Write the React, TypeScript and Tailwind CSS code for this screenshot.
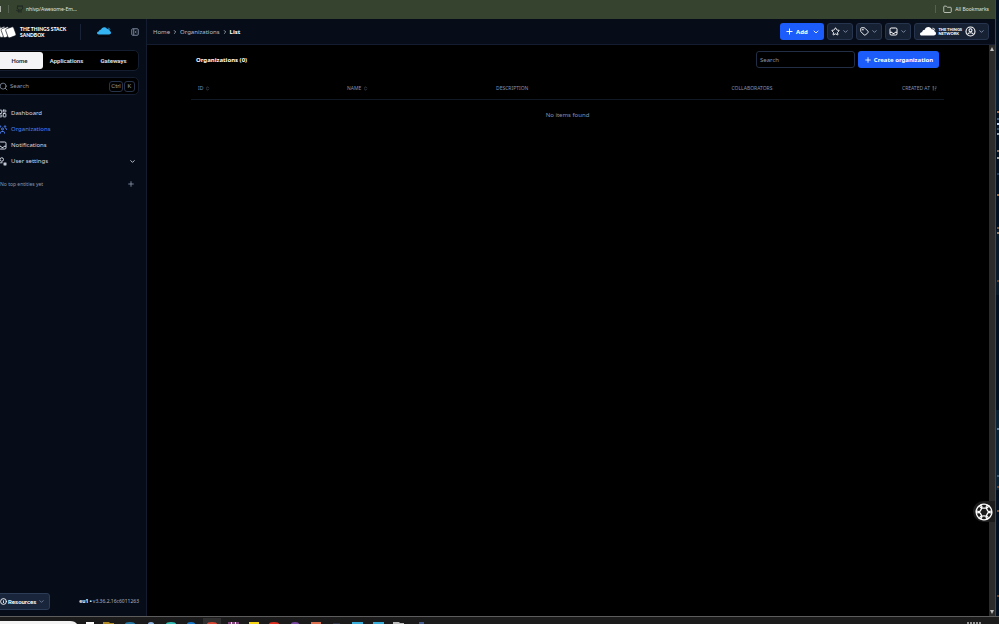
import React from 'react';
import {
  ChevronDown,
  ChevronRight,
  ChevronsUpDown,
  Folder,
  Info,
  LayoutDashboard,
  Plus,
  Search,
  Star,
  Tag,
  Github,
} from 'lucide-react';

function BookmarksBar() {
  return (
    <div className="flex h-[19px] shrink-0 items-center bg-[#36432f] pb-px text-[5px] leading-[8px] text-[#e2e6de]">
      <span className="h-[6px] w-px bg-[#aab0a5]" />
      <span className="ml-[7px] h-[8px] w-px bg-[#566050]" />
      <a href="#bookmark" className="ml-[7px] flex items-center gap-[2px]">
        <Github size={8} className="text-[#1b2420]" strokeWidth={3} />
        nhivp/Awesome-Em...
      </a>
      <span className="ml-auto h-[8px] w-px bg-[#566050]" />
      <button type="button" className="mr-[6px] ml-[7px] flex items-center gap-[3px]">
        <Folder size={9} strokeWidth={2} />
        All Bookmarks
      </button>
    </div>
  );
}

function StackLogo() {
  return (
    <svg width="20" height="14" viewBox="0 0 20 14" className="shrink-0">
      <g stroke="#070d18" strokeWidth="0.6" fill="#fff">
        <rect x="-2" y="2.5" width="8" height="9.500" rx="1.500" transform="rotate(-20 2 7)" />
        <rect x="1.500" y="2.500" width="8" height="9.500" rx="1.500" transform="rotate(-20 5 7)" />
        <rect x="5" y="2.500" width="8" height="9.500" rx="1.500" transform="rotate(-20 9 7)" />
        <rect x="9.500" y="2.500" width="8.500" height="9.500" rx="1.500" transform="rotate(-20 14 7)" />
      </g>
    </svg>
  );
}

function Cloud({ className }: { className: string }) {
  return (
    <svg viewBox="0 0 16 9" className={className} fill="currentColor">
      <path d="M2 8.6C.8 8.5 0 7.8 0 6.9c0-1 .9-1.700 2.100-1.700C2.200 3.600 3.500 3 4.500 3.100 5.100 1.200 6.700 0 8.400.1c1.700.1 2.800 1 3.200 2.100 1.900-.4 3.100.9 3 2.400.9.3 1.400 1 1.400 2 0 1.200-1 2-2.300 2Z" />
      <path d="M12.200 1.200q2.500-.4 2.700 2" fill="none" stroke="currentColor" strokeWidth="0.7" />
    </svg>
  );
}

function OrganizationIcon() {
  return (
    <svg width="9" height="9" viewBox="0 0 18 18" fill="none" stroke="currentColor" strokeWidth="2">
      <circle cx="9" cy="8" r="2" />
      <circle cx="4" cy="3" r="1.500" />
      <circle cx="14" cy="3" r="1.500" />
      <path d="M5 17v-1.500a2.500 2.500 0 0 1 2.500-2.500h3a2.500 2.500 0 0 1 2.500 2.500V17M1 10V8.500a2 2 0 0 1 2-2h1M17 10V8.500a2 2 0 0 0-2-2h-1" />
    </svg>
  );
}

function UserSettingsIcon() {
  return (
    <svg width="9" height="9" viewBox="0 0 18 18" fill="none" stroke="currentColor" strokeWidth="2">
      <circle cx="7.500" cy="5" r="3.500" />
      <path d="M2 17v-2a3.500 3.500 0 0 1 3.500-3.500H9" />
      <circle cx="14" cy="14" r="2" />
      <path d="M14 10v8M10.500 12l7 4M17.500 12l-7 4" strokeWidth="1.200" />
    </svg>
  );
}

function InboxIcon() {
  return (
    <svg width="9" height="9" viewBox="0 0 18 18" fill="none" stroke="currentColor" strokeWidth="2">
      <rect x="2" y="2" width="14" height="14" rx="2.500" />
      <path d="M2 10.500h4l1.500 2.500h3l1.500-2.500h4" />
    </svg>
  );
}

function PanelIcon() {
  return (
    <svg width="8" height="8" viewBox="0 0 16 16" fill="none" stroke="currentColor" strokeWidth="1.800">
      <rect x="1.500" y="1.500" width="13" height="13" rx="2" />
      <path d="M5.500 2v12M11 5.500 8.500 8l2.500 2.500" />
    </svg>
  );
}

function AccountIcon() {
  return (
    <svg width="11" height="11" viewBox="0 0 22 22" fill="none" stroke="currentColor" strokeWidth="2.200">
      <circle cx="11" cy="11" r="9" />
      <circle cx="11" cy="8.500" r="3" />
      <path d="M5 17c1-2.500 3-3.500 6-3.500s5 1 6 3.500" />
    </svg>
  );
}

function SortDownIcon() {
  return (
    <svg width="5" height="5" viewBox="0 0 10 10" fill="none" stroke="currentColor" strokeWidth="1.200">
      <path d="M2.500 1v8M1 1.500h3M5.500 2h4M5.500 5h3M5.500 8h2" />
    </svg>
  );
}

const navItems = [
  { label: 'Dashboard', icon: <LayoutDashboard size={9} strokeWidth={2.5} /> },
  { label: 'Organizations', icon: <OrganizationIcon />, active: true },
  { label: 'Notifications', icon: <InboxIcon /> },
];

function Sidebar() {
  return (
    <aside className="flex w-[147px] shrink-0 flex-col overflow-hidden border-r border-[#131d2f] bg-[#070d18] pr-[7px] pb-[6px]">
      <div className="flex h-[31px] shrink-0 items-center pb-[5px]">
        <div className="-ml-[3px] flex items-center gap-[3px]">
          <StackLogo />
          <span className="font-['Lato',sans-serif] text-[5px] leading-[6px] font-black whitespace-nowrap text-white">
            THE THINGS STACK
            <br />
            SANDBOX
          </span>
        </div>
        <span className="ml-auto h-[16px] w-px bg-[#182338]" />
        <div className="mx-[16px] flex flex-col items-center">
          <Cloud className="h-[8px] w-[14px] text-[#35b4f3]" />
          <span className="mt-px h-px w-[12px] bg-[#020407]" />
        </div>
        <button type="button" aria-label="Collapse sidebar" className="ml-[4px] text-[#8592aa]">
          <PanelIcon />
        </button>
      </div>

      <div className="-ml-[6px] flex h-[21px] shrink-0 items-stretch rounded-[5px] border border-[#141e30] bg-black p-px font-['Roboto',sans-serif] text-[6px] font-semibold text-[#e2e6ed]">
        <button type="button" className="w-[47px] rounded-[3px] bg-[#f4f4f6] text-[#222b38]">
          Home
        </button>
        <button type="button" className="flex-1">
          Applications
        </button>
        <button type="button" className="flex-1">
          Gateways
        </button>
      </div>

      <label className="mt-[6px] -ml-[6px] flex h-[18px] shrink-0 items-center rounded-[5px] border border-[#141e30] bg-black pr-[3px] pl-[4px] text-[#8f9bb1]">
        <Search size={9} className="shrink-0" />
        <input
          aria-label="Search"
          placeholder="Search"
          className="ml-[2px] min-w-0 flex-1 bg-transparent text-[6px] outline-none placeholder:text-[#8f9bb1]"
        />
        <kbd className="flex h-[11px] w-[14px] items-center justify-center rounded-[3px] border border-[#27344d] font-['Roboto',sans-serif] text-[6px]">
          Ctrl
        </kbd>
        <kbd className="ml-px flex h-[11px] w-[11px] items-center justify-center rounded-[3px] border border-[#27344d] font-['Roboto',sans-serif] text-[6px]">
          K
        </kbd>
      </label>

      <nav className="mt-[10px] -ml-[2px] text-[6px] text-[#d3dae5]">
        {navItems.map((item) => (
          <a
            key={item.label}
            href="#nav"
            className={`flex h-[16px] items-center gap-[4px] ${item.active ? 'text-[#4b80f5]' : ''}`}
          >
            {item.icon}
            {item.label}
          </a>
        ))}
        <button type="button" className="flex h-[16px] w-full items-center gap-[4px]">
          <UserSettingsIcon />
          User settings
          <ChevronDown size={7} strokeWidth={3} className="mr-[3px] ml-auto" />
        </button>
      </nav>

      <div className="mt-[11px] flex items-center justify-between pr-[4px] text-[5px] text-[#8a97ad]">
        No top entities yet
        <button type="button" aria-label="Add entity">
          <Plus size={8} strokeWidth={2.5} />
        </button>
      </div>

      <div className="mt-auto flex items-center justify-between">
        <button
          type="button"
          className="-ml-[4px] flex h-[17px] w-[54px] items-center rounded-[3px] border border-[#2c3b56] bg-[#19253a] pr-[4px] pl-[3px] font-['Roboto',sans-serif] text-[6px] font-semibold text-white"
        >
          <Info size={7} strokeWidth={3} className="mr-px" />
          Resources
          <ChevronDown size={7} strokeWidth={2.5} className="ml-auto text-[#8390a8]" />
        </button>
        <p className="text-[5px] text-[#a8b4c8]">
          <b className="text-white">eu1 •</b> v3.36.2.16c6011263
        </p>
      </div>
    </aside>
  );
}

function MenuButton({ label, children }: { label: string; children: React.ReactNode }) {
  return (
    <button
      type="button"
      aria-label={label}
      className="flex h-[17px] items-center gap-[2px] rounded-[3px] border border-[#26344d] bg-[#162134] px-[3px] text-white"
    >
      {children}
      <ChevronDown size={7} strokeWidth={3} className="text-[#8794ab]" />
    </button>
  );
}

function Header() {
  return (
    <header className="flex h-[26px] shrink-0 items-center border-b border-[#131d2f] bg-[#070d18] pr-[6px] pl-[6px]">
      <nav aria-label="Breadcrumb" className="flex items-center gap-[2px] text-[6px] text-[#b3bdcd]">
        <a href="#home">Home</a>
        <ChevronRight size={6} strokeWidth={3} />
        <a href="#organizations">Organizations</a>
        <ChevronRight size={6} strokeWidth={3} />
        <span className="font-bold text-white">List</span>
      </nav>
      <div className="ml-auto flex items-center gap-[3px]">
        <button
          type="button"
          className="flex h-[17px] w-[44px] items-center justify-center gap-[2px] rounded-[3px] bg-[#1c5cfb] text-[6px] font-bold text-white"
        >
          <Plus size={9} strokeWidth={2.5} />
          Add
          <ChevronDown size={8} strokeWidth={2.5} className="ml-[2px]" />
        </button>
        <MenuButton label="Bookmarks">
          <Star size={9} strokeWidth={2.5} />
        </MenuButton>
        <MenuButton label="Tags">
          <Tag size={9} strokeWidth={2.5} />
        </MenuButton>
        <MenuButton label="Inbox">
          <InboxIcon />
        </MenuButton>
        <MenuButton label="Account">
          <Cloud className="ml-[2px] h-[9px] w-[16px]" />
          <span className="mr-px text-left font-['Lato',sans-serif] text-[4px] leading-[4px] font-black whitespace-nowrap">
            THE THINGS
            <br />
            NETWORK
          </span>
          <AccountIcon />
        </MenuButton>
      </div>
    </header>
  );
}

function OrganizationsPage() {
  return (
    <main className="min-w-0 flex-1 bg-black pt-[6px] pr-[45px] pl-[44px]">
      <div className="flex items-center pr-[5px] pl-[5px]">
        <h1 className="text-[6px] font-bold text-white">Organizations (0)</h1>
        <input
          aria-label="Search organizations"
          placeholder="Search"
          className="ml-auto h-[17px] w-[99px] rounded-[3px] border border-[#222e45] bg-black px-[3px] text-[6px] text-white placeholder:text-[#8996ac]"
        />
        <button
          type="button"
          className="ml-[3px] flex h-[17px] w-[81px] items-center justify-center gap-[2px] rounded-[3px] bg-[#1c5cfb] text-[6px] font-bold whitespace-nowrap text-white"
        >
          <Plus size={8} strokeWidth={2.5} className="shrink-0" />
          Create organization
        </button>
      </div>

      <table className="mt-[10px] w-full table-fixed text-[5px] leading-[8px] text-[#8493b4]">
        <colgroup>
          <col className="w-[149px]" />
          <col className="w-[149px]" />
          <col />
          <col className="w-[150px]" />
          <col className="w-[117px]" />
        </colgroup>
        <thead>
          <tr className="h-[21px] border-b border-[#111927] text-left">
            <th className="pl-[7px] font-normal">
              <span className="flex items-center gap-[2px]">
                ID <ChevronsUpDown size={5} />
              </span>
            </th>
            <th className="pl-[7px] font-normal">
              <span className="flex items-center gap-[2px]">
                NAME <ChevronsUpDown size={5} />
              </span>
            </th>
            <th className="pl-[7px] font-normal">DESCRIPTION</th>
            <th className="text-center font-normal">COLLABORATORS</th>
            <th className="pr-[7px] font-normal">
              <span className="flex items-center justify-end gap-[2px]">
                CREATED AT <SortDownIcon />
              </span>
            </th>
          </tr>
        </thead>
        <tbody>
          <tr className="h-[31px]">
            <td colSpan={5} className="text-center text-[6px] text-[#8493ae]">
              No items found
            </td>
          </tr>
        </tbody>
      </table>
    </main>
  );
}

function Scrollbar() {
  return (
    <div className="relative flex w-[6px] shrink-0 flex-col items-center justify-between bg-[#2b2b2b] py-[2px]">
      <svg width="4" height="4" viewBox="0 0 4 4" fill="#c0c0c0">
        <path d="M2 0 4 4H0Z" />
      </svg>
      <svg width="4" height="4" viewBox="0 0 4 4" fill="#c0c0c0">
        <path d="M2 4 4 0H0Z" />
      </svg>
      <button
        type="button"
        aria-label="Open assistant"
        className="absolute right-0 bottom-[94px] flex h-[21px] w-[22px] items-center justify-center rounded-l-full bg-[#1b1b1b]"
      >
        <svg width="18" height="18" viewBox="-9 -9 18 18" fill="none" stroke="#fff" strokeWidth="1.300">
          {[0, 60, 120, 180, 240, 300].map((angle) => (
            <ellipse key={angle} cx="0" cy="-5.800" rx="4.200" ry="2" transform={`rotate(${angle})`} />
          ))}
        </svg>
      </button>
    </div>
  );
}

const glints = [
  { y: 21, color: '#b3683a' },
  { y: 28, color: '#41567b' },
  { y: 33, color: '#bdcdf0' },
  { y: 38, color: '#304b60' },
  { y: 43, color: '#96a4a8' },
  { y: 60, color: '#906b52' },
  { y: 67, color: '#a8a49c' },
  { y: 83, color: '#233d5d' },
  { y: 104, color: '#a66b35' },
  { y: 137, color: '#785331' },
  { y: 142, color: '#a37c55' },
  { y: 190, color: '#6b3c20' },
  { y: 338, color: '#617f9a' },
  { y: 385, color: '#405a71' },
  { y: 396, color: '#6f432c' },
  { y: 420, color: '#85552f' },
  { y: 505, color: '#6b3c20' },
];

function DesktopEdge() {
  return (
    <svg width="4" className="h-full shrink-0 border-l border-[#45484b] bg-[#03101f]">
      <rect y="70" width="4" height="40" fill="#091d31" />
      <rect y="230" width="4" height="65" fill="#0b1a29" />
      <rect y="410" width="4" height="80" fill="#0b2235" />
      {glints.map((glint) => (
        <rect key={glint.y} x="1" y={glint.y + 90} width="3" height="2" fill={glint.color} />
      ))}
    </svg>
  );
}

function Taskbar() {
  return (
    <footer className="h-[8px] shrink-0 overflow-hidden border-t border-[#5d5d5d] bg-[#1c1b1c]">
      <svg width="100%" height="7">
        <path d="M0 4h70q5 0 7 3H0Z" fill="#f3f3f3" />
        <rect x="203" y="1" width="18" height="6" fill="#303030" />
        <path d="M86 5h8v2h-8Z" fill="#fff" />
        <path d="M103 5h6l1 1h4v1h-11Z" fill="#b08a25" />
        <ellipse cx="130" cy="7" rx="5" ry="2" fill="#287ba8" />
        <ellipse cx="151" cy="7" rx="3" ry="2" fill="#8ab0dd" />
        <ellipse cx="171" cy="7" rx="5" ry="2" fill="#32bdb5" />
        <ellipse cx="191" cy="7" rx="4" ry="2" fill="#1678ca" />
        <ellipse cx="212" cy="7" rx="5" ry="2" fill="#d94532" />
        <path d="M228 5h11v2h-11Z" fill="#80447b" />
        <path d="M231 5h1v2h-1ZM235 5h1v2h-1Z" fill="#ddd" />
        <path d="M249 5h10v2h-10Z" fill="#f5d413" />
        <ellipse cx="274" cy="7" rx="5" ry="2" fill="#df2e1d" />
        <ellipse cx="295" cy="7" rx="4" ry="2" fill="#7946a1" />
        <path d="M311 5h10v2h-10Z" fill="#d86e4e" />
        <path d="M333 6h7v1h-7Z" fill="#303447" />
        <path d="M352 5h11v2h-11ZM373 5h11v2h-11Z" fill="#37acd9" />
        <path d="M393 5h6l1 1h4v1h-11Z" fill="#bcbcbc" />
        <path d="M419 5h5v2h-5Z" fill="#435a8f" />
        <path d="M967 6h14" stroke="#b8b8b8" strokeWidth="1.500" strokeDasharray="2 1" />
      </svg>
    </footer>
  );
}

export default function App() {
  return (
    <div className="flex h-screen flex-col overflow-hidden bg-black font-['Noto_Sans',sans-serif] leading-none">
      <div className="flex min-h-0 flex-1">
        <div className="flex min-w-0 flex-1 flex-col">
          <BookmarksBar />
          <div className="flex min-h-0 flex-1">
            <Sidebar />
            <div className="flex min-w-0 flex-1 flex-col">
              <Header />
              <div className="flex min-h-0 flex-1">
                <OrganizationsPage />
                <Scrollbar />
              </div>
            </div>
          </div>
        </div>
        <DesktopEdge />
      </div>
      <Taskbar />
    </div>
  );
}
